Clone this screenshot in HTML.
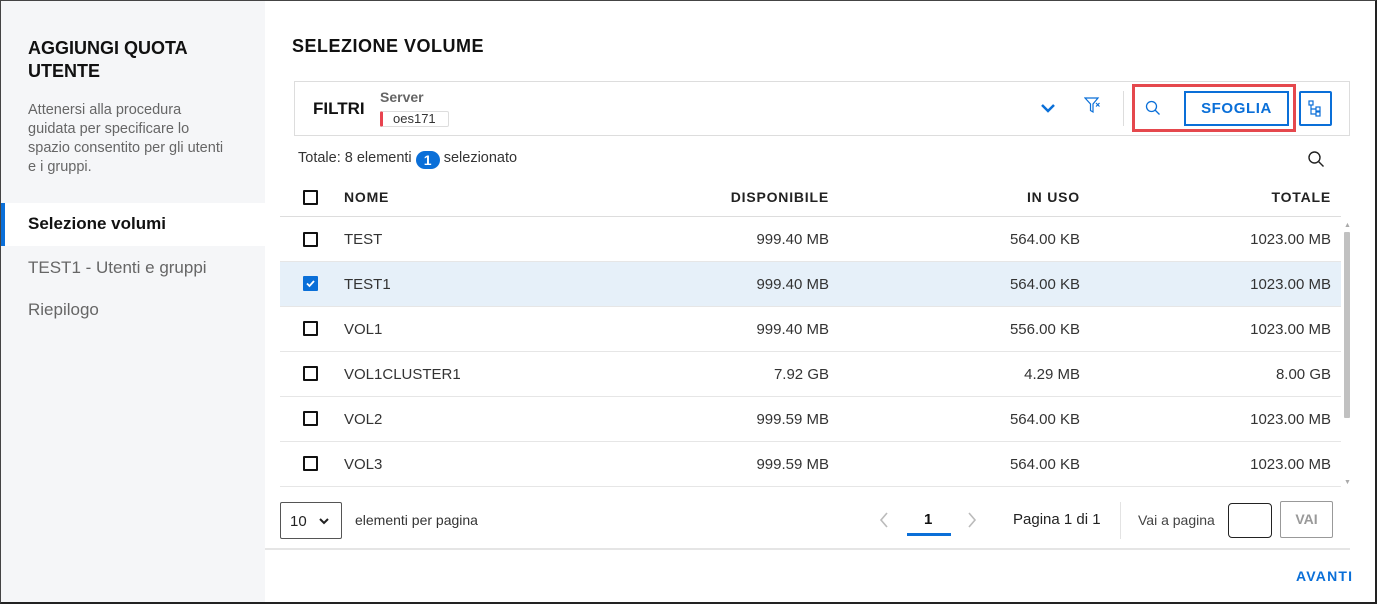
<!DOCTYPE html>
<html><head><meta charset="utf-8"><style>
*{box-sizing:border-box;margin:0;padding:0}
body{width:1377px;height:604px;overflow:hidden;font-family:"Liberation Sans",Arial,sans-serif;background:#fff;position:relative;color:#222}
.frame{position:absolute;left:0;top:0;width:1377px;height:604px;border-top:1px solid #444;border-left:1px solid #444;border-right:2px solid #222;border-bottom:2px solid #222;pointer-events:none;z-index:10}
.side{position:absolute;left:0;top:0;width:265px;height:604px;background:#f5f6f8}
.abs{position:absolute}
.cb{position:absolute;width:15px;height:15px;border:2px solid #111;border-radius:1px}
.row{position:absolute;left:280px;width:1061px;height:45px;border-bottom:1px solid #e6e6e6;font-size:15px;color:#333}
.row span{position:absolute;top:14px}
.r1{right:512px}.r2{right:261px}.r3{right:10px}
.hdr{font-weight:bold;font-size:14px;letter-spacing:.8px;color:#222}
</style></head><body>
<div class="side">
<div class="abs" style="left:28px;top:37px;font-weight:bold;font-size:18px;line-height:23px;color:#111">AGGIUNGI QUOTA<br>UTENTE</div>
<div class="abs" style="left:28px;top:101px;font-size:14.5px;line-height:19px;color:#666;white-space:nowrap">Attenersi alla procedura<br>guidata per specificare lo<br>spazio consentito per gli utenti<br>e i gruppi.</div>
<div class="abs" style="left:0;top:203px;width:265px;height:43px;background:#fff"></div>
<div class="abs" style="left:1px;top:203px;width:4px;height:43px;background:#0a6fd8"></div>
<div class="abs" style="left:28px;top:214px;font-weight:bold;font-size:17px;color:#111">Selezione volumi</div>
<div class="abs" style="left:28px;top:258px;font-size:17px;color:#666">TEST1 - Utenti e gruppi</div>
<div class="abs" style="left:28px;top:300px;font-size:17px;color:#666">Riepilogo</div>
</div>

<div class="abs" style="left:292px;top:36px;font-weight:bold;font-size:18px;letter-spacing:.5px;color:#111">SELEZIONE VOLUME</div>

<div class="abs" style="left:294px;top:81px;width:1056px;height:55px;border:1px solid #ddd"></div>
<div class="abs" style="left:313px;top:99px;font-weight:bold;font-size:17px;color:#111">FILTRI</div>
<div class="abs" style="left:380px;top:89px;font-weight:bold;font-size:14px;color:#666">Server</div>
<div class="abs" style="left:380px;top:111px;width:69px;height:16px;border:1px solid #ddd;border-left:3px solid #e8434f;border-radius:2px;font-size:13px;line-height:14px;padding-left:10px;color:#333">oes171</div>
<svg class="abs" style="left:1040px;top:102px" width="16" height="12" viewBox="0 0 16 12"><path d="M2 3l6 6 6-6" fill="none" stroke="#0a6fd8" stroke-width="2.5"/></svg>
<svg class="abs" style="left:1084px;top:96px" width="19" height="20" viewBox="0 0 19 20"><path d="M1 2h13l-5 6v8l-2.5-1.5V8z" fill="none" stroke="#0a6fd8" stroke-width="1.2"/><path d="M12 7l3.5 3.5M15.5 7L12 10.5" stroke="#0a6fd8" stroke-width="1.2"/></svg>
<div class="abs" style="left:1123px;top:91px;width:1px;height:35px;background:#ddd"></div>
<div class="abs" style="left:1132px;top:84px;width:164px;height:48px;border:3px solid #e5484d"></div>
<svg class="abs" style="left:1145px;top:100px" width="16" height="16" viewBox="0 0 16 16"><circle cx="6.5" cy="6.5" r="5" fill="none" stroke="#0a6fd8" stroke-width="1.3"/><path d="M10 10l4.5 4.5" stroke="#0a6fd8" stroke-width="1.3"/></svg>
<div class="abs" style="left:1184px;top:91px;width:105px;height:35px;border:2px solid #0a6fd8;color:#0a6fd8;font-weight:bold;font-size:15px;letter-spacing:.6px;text-align:center;line-height:31px">SFOGLIA</div>
<div class="abs" style="left:1299px;top:91px;width:33px;height:35px;border:2px solid #0a6fd8;border-radius:2px"></div>
<svg class="abs" style="left:1308px;top:100px" width="16" height="18" viewBox="0 0 16 18"><rect x="1" y="1" width="4" height="4" fill="none" stroke="#0a6fd8" stroke-width="1.2"/><path d="M3 5v9h5M3 9h5" fill="none" stroke="#0a6fd8" stroke-width="1.2"/><rect x="8" y="7" width="4" height="4" fill="none" stroke="#0a6fd8" stroke-width="1.2"/><rect x="8" y="12" width="4" height="4" fill="none" stroke="#0a6fd8" stroke-width="1.2"/></svg>

<div class="abs" style="left:298px;top:150px;font-size:14.5px;color:#333">Totale: 8 elementi <span style="display:inline-block;width:24px;height:18px;border-radius:9px;background:#0a6fd8;color:#fff;font-weight:bold;text-align:center;font-size:14px;line-height:18px;vertical-align:-3px">1</span> selezionato</div>
<svg class="abs" style="left:1307px;top:150px" width="18" height="18" viewBox="0 0 18 18"><circle cx="7.5" cy="7.5" r="5.5" fill="none" stroke="#222" stroke-width="1.4"/><path d="M11.5 11.5l5 5" stroke="#222" stroke-width="1.4"/></svg>

<div class="row hdr" style="top:172px;height:45px;border-bottom:1px solid #ddd"><div class="cb" style="left:23px;top:18px"></div><span style="left:64px;top:17px">NOME</span><span class="r1" style="top:17px">DISPONIBILE</span><span class="r2" style="top:17px">IN USO</span><span class="r3" style="top:17px">TOTALE</span></div>

<div class="row" style="top:217px"><div class="cb" style="left:23px;top:15px"></div><span style="left:64px">TEST</span><span class="r1">999.40 MB</span><span class="r2">564.00 KB</span><span class="r3">1023.00 MB</span></div>
<div class="row" style="top:262px;background:#e6f0f9"><div class="cb" style="left:23px;top:14px;background:#0a6fd8;border-color:#0a6fd8"><svg width="11" height="11" viewBox="0 0 11 11" style="position:absolute;left:0;top:0"><path d="M2 5.5l2.5 2.5 4.5-5" fill="none" stroke="#fff" stroke-width="1.8"/></svg></div><span style="left:64px">TEST1</span><span class="r1">999.40 MB</span><span class="r2">564.00 KB</span><span class="r3">1023.00 MB</span></div>
<div class="row" style="top:307px"><div class="cb" style="left:23px;top:14px"></div><span style="left:64px">VOL1</span><span class="r1">999.40 MB</span><span class="r2">556.00 KB</span><span class="r3">1023.00 MB</span></div>
<div class="row" style="top:352px"><div class="cb" style="left:23px;top:14px"></div><span style="left:64px">VOL1CLUSTER1</span><span class="r1">7.92 GB</span><span class="r2">4.29 MB</span><span class="r3">8.00 GB</span></div>
<div class="row" style="top:397px"><div class="cb" style="left:23px;top:14px"></div><span style="left:64px">VOL2</span><span class="r1">999.59 MB</span><span class="r2">564.00 KB</span><span class="r3">1023.00 MB</span></div>
<div class="row" style="top:442px"><div class="cb" style="left:23px;top:14px"></div><span style="left:64px">VOL3</span><span class="r1">999.59 MB</span><span class="r2">564.00 KB</span><span class="r3">1023.00 MB</span></div>

<div class="abs" style="left:1344px;top:232px;width:6px;height:186px;background:#c1c1c1;border-radius:1px"></div>
<div class="abs" style="left:1344px;top:222px;font-size:7px;color:#aaa">▲</div>
<div class="abs" style="left:1344px;top:479px;font-size:7px;color:#aaa">▼</div>

<div class="abs" style="left:280px;top:502px;width:62px;height:37px;border:1px solid #555;border-radius:2px;font-size:15px;padding:10px 0 0 9px">10</div>
<svg class="abs" style="left:318px;top:517px" width="12" height="9" viewBox="0 0 12 9"><path d="M2 2l4 4 4-4" fill="none" stroke="#222" stroke-width="2"/></svg>
<div class="abs" style="left:355px;top:512px;font-size:14px;color:#333">elementi per pagina</div>
<svg class="abs" style="left:878px;top:511px" width="12" height="18" viewBox="0 0 12 18"><path d="M9 2L3 9l6 7" fill="none" stroke="#bbb" stroke-width="1.6"/></svg>
<div class="abs" style="left:924px;top:511px;font-size:15px;font-weight:bold;color:#111">1</div>
<div class="abs" style="left:907px;top:533px;width:44px;height:3px;background:#0a6fd8"></div>
<svg class="abs" style="left:966px;top:511px" width="12" height="18" viewBox="0 0 12 18"><path d="M3 2l6 7-6 7" fill="none" stroke="#bbb" stroke-width="1.6"/></svg>
<div class="abs" style="left:1013px;top:511px;font-size:15px;color:#222">Pagina 1 di 1</div>
<div class="abs" style="left:1120px;top:502px;width:1px;height:37px;background:#e3e3e3"></div>
<div class="abs" style="left:1138px;top:512px;font-size:14px;color:#444">Vai a pagina</div>
<div class="abs" style="left:1228px;top:503px;width:44px;height:35px;border:1px solid #222;border-radius:4px"></div>
<div class="abs" style="left:1280px;top:501px;width:53px;height:37px;border:1px solid #999;border-radius:2px;color:#999;font-weight:bold;font-size:14px;text-align:center;line-height:35px">VAI</div>
<div class="abs" style="left:265px;top:548px;width:1085px;height:2px;background:#e5e5e5"></div>
<div class="abs" style="left:1296px;top:568px;font-weight:bold;font-size:14px;color:#0a6fd8;letter-spacing:1.2px">AVANTI</div>
<div class="frame"></div>
</body></html>
